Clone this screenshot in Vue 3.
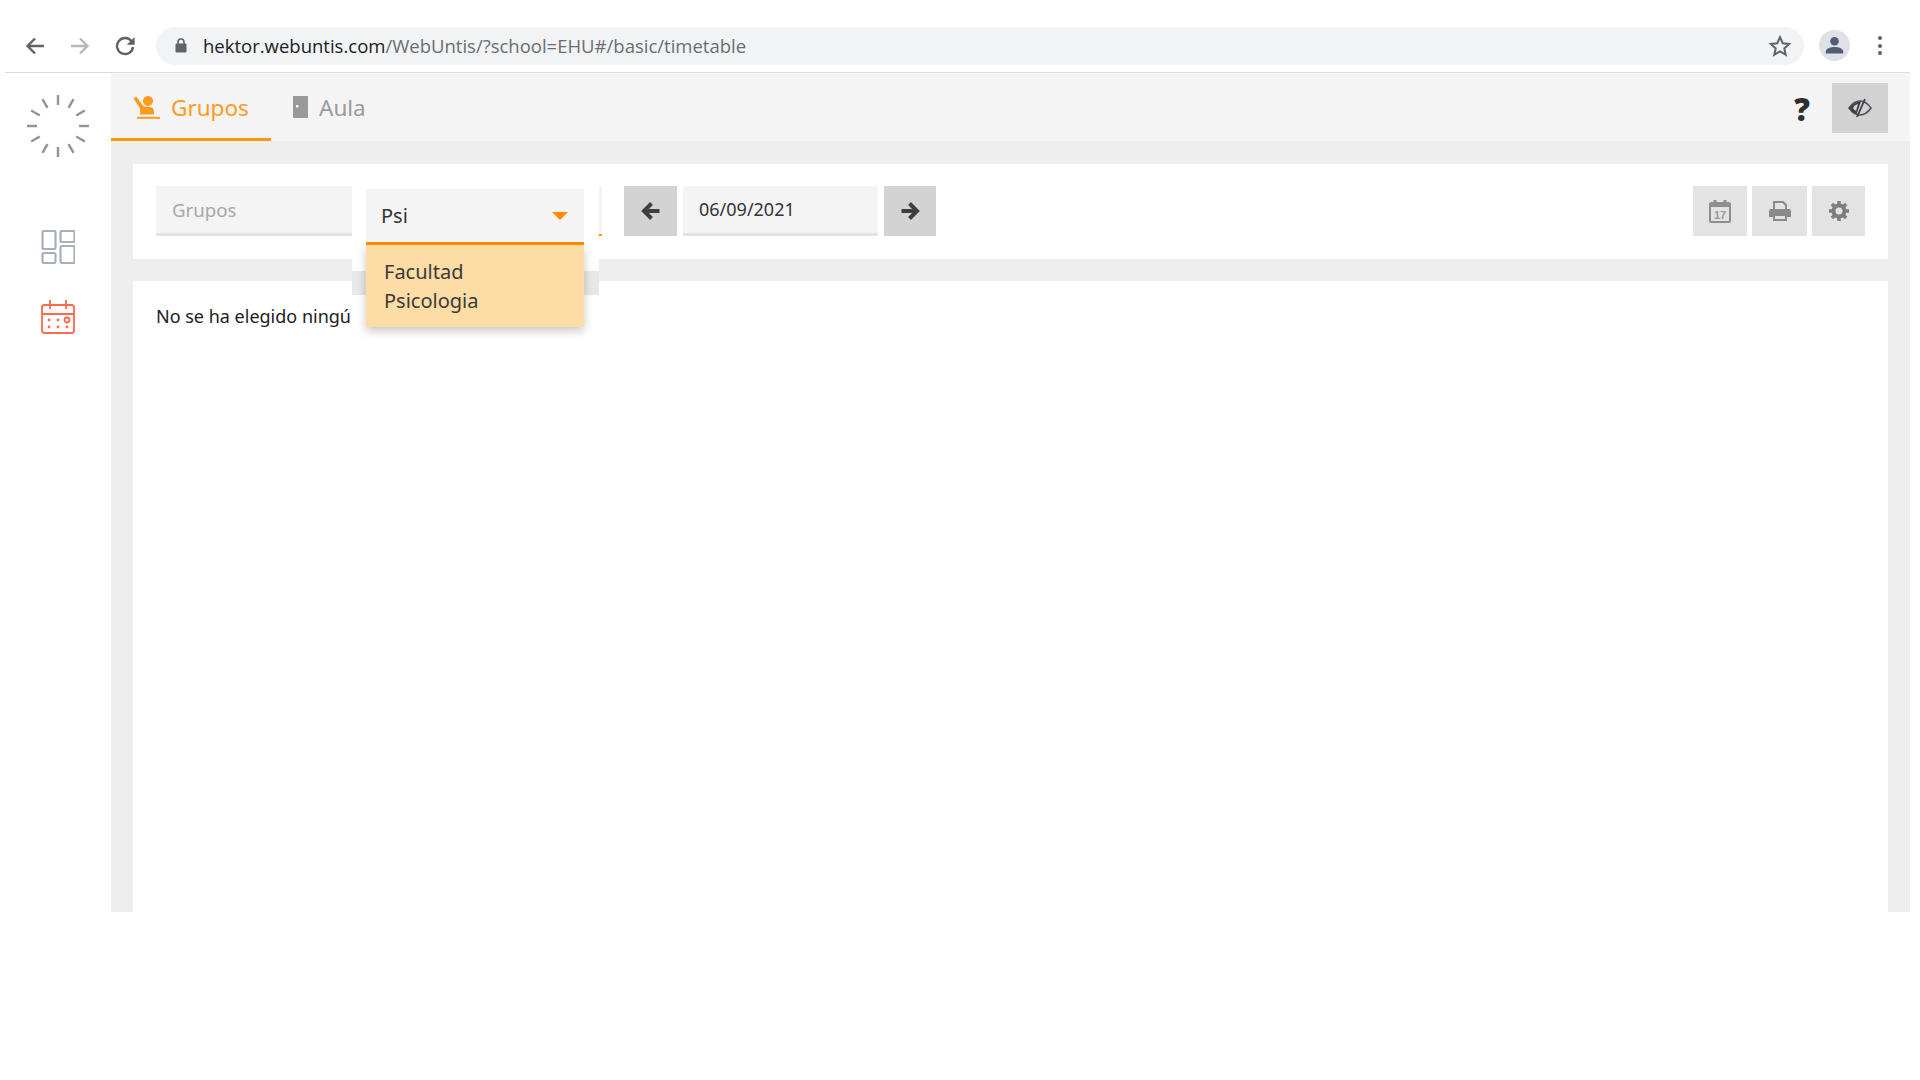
<script setup>
const ticks = Array.from({ length: 12 }, (_, i) => i * 30)
</script>

<template>
  <div class="page">
    <div class="browser">
      <div class="nav-icons">
        <svg class="nav-ic" viewBox="0 0 20 20"><path d="M19 10H3M10 2.5 2.5 10l7.5 7.5" fill="none" stroke="#5f6368" stroke-width="2.4"/></svg>
        <svg class="nav-ic" viewBox="0 0 20 20"><path d="M1 10h16M10 2.5l7.5 7.5-7.5 7.5" fill="none" stroke="#b6b8ba" stroke-width="2.4"/></svg>
        <svg class="nav-ic" viewBox="0 0 20 20"><path d="M16.6 5.4A8 8 0 1 0 18 11" fill="none" stroke="#5f6368" stroke-width="2.4"/><path d="M19.6 1v7.8h-7.8z" fill="#5f6368"/></svg>
      </div>
      <div class="omnibox">
        <svg class="lock" viewBox="0 0 12 15"><path d="M3 6V4a3 3 0 0 1 6 0v2" fill="none" stroke="#5f6368" stroke-width="1.6"/><rect x="0.5" y="5.5" width="11" height="9" rx="1.2" fill="#5f6368"/></svg>
        <span class="url"><span class="url-host">hektor.webuntis.com</span>/WebUntis/?school=EHU#/basic/timetable</span>
        <svg class="star" viewBox="0 0 24 24"><path d="M12 3.2l2.7 6 6.5.7-4.9 4.4 1.4 6.4L12 17.4l-5.7 3.3 1.4-6.4-4.9-4.4 6.5-.7z" fill="none" stroke="#5f6368" stroke-width="2"/></svg>
      </div>
      <div class="avatar">
        <svg viewBox="0 0 20 20" width="19" height="19"><circle cx="10" cy="5.5" r="4.5" fill="#505f73"/><path d="M0.8 18.5v-2c0-3.6 5.5-5 9.2-5s9.2 1.400 9.200 5v2z" fill="#505f73"/></svg>
      </div>
      <div class="kebab"><i></i><i></i><i></i></div>
    </div>

    <div class="app">
      <aside class="sidebar">
        <svg class="spinner" viewBox="-31 -31 62 62">
          <line v-for="a in ticks" :key="a" x1="0" y1="-31" x2="0" y2="-21" :transform="`rotate(${a})`" stroke="#8b959d" stroke-width="2.400"/>
        </svg>
        <svg class="dash" viewBox="0 0 34 34">
          <g fill="none" stroke="#a6b0b9" stroke-width="2.200">
            <rect x="1.500" y="1" width="13" height="18" rx="1.500"/>
            <rect x="19.500" y="1" width="14" height="11" rx="1.500"/>
            <rect x="1.500" y="23" width="13" height="10" rx="1.500"/>
            <rect x="19.500" y="16" width="14" height="17" rx="1.500"/>
          </g>
        </svg>
        <svg class="cal" viewBox="0 0 34 34">
          <g fill="none" stroke="#fc6a4c" stroke-width="1.800">
            <rect x="1" y="5" width="32" height="28" rx="2.500"/>
            <path d="M1 14h32M9 0v9M25 0v9"/>
            <circle cx="26" cy="20" r="2.500"/>
          </g>
          <g fill="#fc6a4c">
            <circle cx="8" cy="20" r="1.400"/><circle cx="17" cy="20" r="1.400"/>
            <circle cx="8" cy="27" r="1.400"/><circle cx="17" cy="27" r="1.400"/><circle cx="26" cy="27" r="1.400"/>
          </g>
        </svg>
      </aside>

      <div class="column">
        <header class="tabs">
          <div class="tab active">
            <svg class="tab-ic-hand" viewBox="0 0 27 23" fill="#ff9a1f">
              <circle cx="15" cy="5" r="5"/>
              <path d="M0.500 2.500 3.500 0.500 9 8.500Q11 11 15 11h2q4 .5 4 5v2.500H7v-6z"/>
              <rect x="4" y="20.800" width="23" height="2"/>
            </svg>
            <span>Grupos</span>
          </div>
          <div class="tab">
            <svg class="tab-ic-door" viewBox="0 0 15 22"><rect width="15" height="22" fill="#999"/><rect x="3" y="9" width="2.500" height="2.500" fill="#f4f4f4"/></svg>
            <span>Aula</span>
          </div>
          <div class="help">?</div>
          <button class="eye-btn">
            <svg viewBox="0 0 24 18" width="24" height="18">
              <path d="M1 9q5-7 11-7t11 7q-5 7-11 7T1 9z" fill="none" stroke="#4a4f55" stroke-width="1.600"/>
              <path d="M1.500 9Q6 3 13 2.500L8.500 15Q4 13 1.500 9z" fill="#3c4046"/>
              <path d="M5 9q1-3 5-4l-2 7Q6 11 5 9z" fill="#d3d3d3"/>
              <path d="M17 0 9 18" stroke="#3c4046" stroke-width="1.800"/>
            </svg>
          </button>
        </header>

        <main class="content">
          <section class="toolbar card">
            <div class="field grupos">Grupos</div>
            <div class="select-slot">
              <div class="overlay">
                <div class="overlay-white"></div>
                <div class="overlay-grey"></div>
              </div>
              <div class="select">
                <div class="select-head">
                  <span>Psi</span>
                  <i class="caret"></i>
                </div>
                <div class="select-list">Facultad<br />Psicologia</div>
              </div>
            </div>
            <button class="sq dark prev">
              <svg viewBox="0 0 20 20" width="20" height="20"><path d="M18.500 10H4M10.500 2.500 3 10l7.500 7.500" fill="none" stroke="#3f3f3f" stroke-width="4"/></svg>
            </button>
            <div class="field date">06/09/2021</div>
            <button class="sq dark next">
              <svg viewBox="0 0 20 20" width="20" height="20"><path d="M1.500 10H16M9.500 2.500 17 10l-7.500 7.500" fill="none" stroke="#3f3f3f" stroke-width="4"/></svg>
            </button>
            <div class="actions">
              <button class="sq light w54 ic-cal">
                <svg viewBox="0 0 22 24" width="22" height="24">
                  <rect x="1" y="4" width="20" height="19" rx="1.500" fill="none" stroke="#8e8e8e" stroke-width="2"/>
                  <rect x="1" y="4" width="20" height="4" fill="#8e8e8e"/>
                  <rect x="4.500" y="1" width="3" height="5" fill="#8e8e8e"/><rect x="14.500" y="1" width="3" height="5" fill="#8e8e8e"/>
                </svg>
                <span class="cal-num">17</span>
              </button>
              <button class="sq light w55">
                <svg viewBox="0 0 22 20" width="22" height="20">
                  <path d="M5 8V1h9l3 3v4" fill="none" stroke="#8a8a8a" stroke-width="2"/>
                  <path d="M2 8h18a2 2 0 0 1 2 2v6h-4v-3H4v3H0v-6a2 2 0 0 1 2-2z" fill="#8a8a8a"/>
                  <path d="M5 14h12v5H5z" fill="none" stroke="#8a8a8a" stroke-width="2"/>
                </svg>
              </button>
              <button class="sq light w53">
                <svg viewBox="0 0 20 20" width="20" height="20">
                  <circle cx="10" cy="10" r="5.500" fill="none" stroke="#7e7e7e" stroke-width="4"/>
                  <g stroke="#7e7e7e" stroke-width="3.600">
                    <path d="M10 0v4M10 16v4M0 10h4M16 10h4M2.900 2.900l2.800 2.800M14.300 14.300l2.800 2.800M2.900 17.100l2.800-2.800M14.300 5.700l2.800-2.800"/>
                  </g>
                </svg>
              </button>
            </div>
          </section>
          <section class="body card">
            <p class="empty">No se ha elegido ningú</p>
          </section>
        </main>
      </div>
    </div>
  </div>
</template>

<style>
html, body { margin: 0; background: #fff; }
</style>

<style scoped>
.page {
  width: 1920px;
  height: 1080px;
  background: #fff;
  overflow: hidden;
  font-family: "Noto Sans", "Open Sans", sans-serif;
  color: #333;
}
.browser {
  height: 72px;
  margin: 0 10px 0 5px;
  box-sizing: border-box;
  display: flex;
  align-items: center;
  padding: 22px 0 0 20px;
  position: relative;
}
.nav-icons { display: flex; gap: 25px; width: 131px; flex: none; margin-top: -3px; }
.nav-ic { width: 20px; height: 20px; }
.omnibox {
  width: 1648px;
  height: 38px;
  margin-top: -3px;
  border-radius: 19px;
  background: #f1f3f4;
  display: flex;
  align-items: center;
  padding: 0 12px 0 19px;
  box-sizing: border-box;
  flex: none;
}
.lock { width: 12px; height: 15px; flex: none; }
.url {
  margin-left: 16px;
  font-family: "Open Sans", sans-serif;
  font-size: 18.500px;
  line-height: 24px;
  color: #6a6e73;
  white-space: nowrap;
  flex: 1;
  padding-top: 1px;
}
.url-host { color: #202124; }
.star { width: 24px; height: 24px; flex: none; }
.avatar {
  width: 31px;
  height: 31px;
  border-radius: 50%;
  background: #dee1e6;
  display: flex;
  align-items: center;
  justify-content: center;
  margin: -3px 0 0 15px;
  flex: none;
}
.kebab {
  display: flex;
  flex-direction: column;
  gap: 3.500px;
  margin: -3px 0 0 28px;
}
.kebab i { width: 4px; height: 4px; border-radius: 50%; background: #5f6368; display: block; }

.app {
  margin: 0 10px 0 5px;
  height: 840px;
  display: flex;
  border-top: 1px solid #dadce0;
  box-sizing: border-box;
}
.sidebar {
  width: 106px;
  flex: none;
  display: flex;
  flex-direction: column;
  align-items: center;
  padding-top: 22px;
  box-sizing: border-box;
}
.spinner { width: 62px; height: 62px; }
.dash { width: 34px; height: 34px; margin-top: 73px; }
.cal { width: 34px; height: 34px; margin-top: 36px; }

.column { flex: 1; display: flex; flex-direction: column; min-width: 0; }
.tabs {
  height: 68px;
  flex: none;
  background: #f4f4f4;
  display: flex;
  align-items: stretch;
  box-sizing: border-box;
}
.tab {
  display: flex;
  align-items: center;
  gap: 11px;
  padding: 4px 22px 0 22px;
  font-size: 22.500px;
  color: #9b9b9b;
  box-sizing: border-box;
  border-bottom: 3px solid transparent;
}
.tab.active { color: #ff9a1f; border-bottom-color: #ff9800; width: 160px; }
.tab-ic-hand { width: 27px; height: 23px; flex: none; margin-bottom: 1px; }
.tab-ic-door { width: 15px; height: 22px; flex: none; margin-bottom: 1px; }
.help {
  margin-left: auto;
  align-self: center;
  font-family: "Open Sans", sans-serif;
  font-weight: 800;
  font-size: 31px;
  line-height: 1;
  color: #2f2f2f;
  margin-right: 22px;
  margin-top: 5px;
}
.eye-btn {
  width: 56px;
  height: 50px;
  margin: 10px 22px 0 0;
  background: #d3d3d3;
  border: 0;
  padding: 0;
  display: flex;
  align-items: center;
  justify-content: center;
}
.content {
  height: 771px;
  flex: none;
  background: #eeeeee;
  padding: 23px 22px 0 22px;
  box-sizing: border-box;
  display: flex;
  flex-direction: column;
  gap: 22px;
}
.card { background: #fff; }
.toolbar {
  height: 95px;
  flex: none;
  box-sizing: border-box;
  padding: 22px 23px 0;
  display: flex;
  align-items: flex-start;
}
.field {
  height: 50px;
  background: #f4f4f4;
  border-bottom: 3px solid #e3e3e3;
  box-sizing: border-box;
  font-size: 18.600px;
  line-height: 47px;
  padding-left: 16px;
}
.grupos { width: 196px; color: #a8a8a8; flex: none; }
.date { width: 195px; margin: 0 6px; flex: none; color: #333; font-size: 18px; }
.select-slot {
  width: 250px;
  height: 50px;
  flex: none;
  margin-right: 22px;
  background: #f4f4f4;
  border-bottom: 2px solid #ff9800;
  box-sizing: border-box;
  position: relative;
}
.overlay {
  position: absolute;
  left: 0;
  top: 0;
  width: 247px;
}
.overlay-white { height: 85px; background: #fff; }
.overlay-grey { height: 24px; background: #e8e8e8; }
.select {
  position: absolute;
  left: 14px;
  top: 3px;
  width: 218px;
}
.select-head {
  height: 56px;
  box-sizing: border-box;
  background: #f4f4f4;
  border-bottom: 3px solid #ff8c00;
  display: flex;
  align-items: center;
  justify-content: space-between;
  padding: 0 16px 0 15px;
  font-size: 20px;
  color: #333;
  position: relative;
  z-index: 1;
}
.caret {
  width: 0;
  height: 0;
  border-left: 8px solid transparent;
  border-right: 8px solid transparent;
  border-top: 8px solid #ff8c00;
}
.select-list {
  height: 82px;
  box-sizing: border-box;
  background: #fedca6;
  padding: 12px 0 0 18px;
  font-size: 20px;
  line-height: 29px;
  color: #3a3a3a;
  box-shadow: 0 4px 9px rgba(0, 0, 0, 0.22);
}
.sq {
  height: 50px;
  border: 0;
  padding: 0;
  flex: none;
  display: flex;
  align-items: center;
  justify-content: center;
  position: relative;
}
.sq.dark { width: 53px; background: #d3d3d3; }
.sq.next { width: 52px; }
.sq.light { background: #e3e3e3; }
.w54 { width: 54px; }
.w55 { width: 55px; }
.w53 { width: 53px; }
.actions { margin-left: auto; display: flex; gap: 5px; }
.cal-num {
  position: absolute;
  left: 0;
  right: 0;
  top: 23px;
  text-align: center;
  font-size: 11px;
  line-height: 12px;
  font-weight: 700;
  color: #9a9a9a;
}
.body { flex: 1; min-height: 0; padding: 22.500px 23px; box-sizing: border-box; }
.empty { margin: 0; font-size: 18px; line-height: 24px; color: #222; }
</style>
